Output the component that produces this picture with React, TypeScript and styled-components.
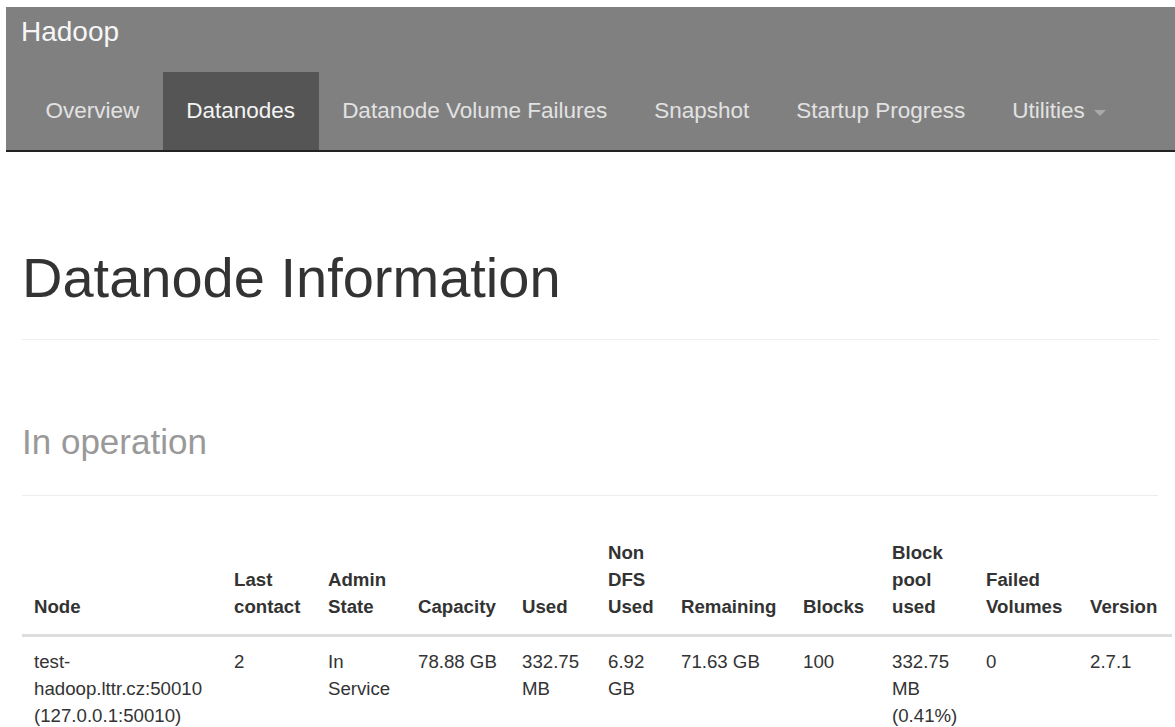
import React from "react";
import styled, { createGlobalStyle } from "styled-components";

const GlobalStyle = createGlobalStyle`
  html, body {
    margin: 0;
    padding: 0;
    background: #ffffff;
  }
  body {
    font-family: "Liberation Sans", Arial, Helvetica, sans-serif;
    color: #333333;
  }
  * {
    box-sizing: border-box;
  }
`;

const Page = styled.div`
  padding-top: 7px;
  min-height: 100vh;
`;

const Navbar = styled.nav`
  margin-left: 6px;
  background: #808080;
  border-bottom: 2px solid #222222;
  display: flex;
  flex-direction: column;
`;

const BrandRow = styled.div`
  height: 65px;
  padding: 10px 0 0 15px;
`;

const Brand = styled.a`
  display: inline-block;
  font-size: 28px;
  line-height: 30px;
  color: #f6f6f6;
  text-decoration: none;
`;

const NavList = styled.ul`
  display: flex;
  list-style: none;
  margin: 0;
  padding: 0 0 0 16px;
`;

const NavItem = styled.li<{ $active?: boolean }>`
  background: ${(p) => (p.$active ? "#555555" : "transparent")};
`;

const NavLink = styled.a<{ $active?: boolean }>`
  display: flex;
  align-items: center;
  padding: 24px 23.5px;
  font-size: 22.5px;
  line-height: 30px;
  color: ${(p) => (p.$active ? "#f4f4f4" : "#e2e2e2")};
  text-decoration: none;
  white-space: nowrap;
`;

const Caret = styled.span`
  display: inline-block;
  width: 0;
  height: 0;
  margin-left: 9px;
  margin-top: 3px;
  border-top: 6px solid #a9a9a9;
  border-left: 6px solid transparent;
  border-right: 6px solid transparent;
`;

const Main = styled.main`
  padding: 0 17px 0 22px;
`;

const PageHeader = styled.div<{ $gap: number }>`
  margin-top: ${(p) => p.$gap}px;
  padding-bottom: 15px;
  border-bottom: 1px solid #eeeeee;
`;

const Heading = styled.h1`
  margin: 0 0 15px;
  font-size: 56px;
  line-height: 1.1;
  font-weight: 400;
  color: #333333;
`;

const Subtle = styled.small`
  font-size: 35px;
  font-weight: 400;
  color: #999999;
`;

const Table = styled.table`
  margin-top: 32px;
  width: 1150px;
  table-layout: fixed;
  border-collapse: collapse;
  border-spacing: 0;
  font-size: 18.67px;
  line-height: 26.67px;
`;

const HeadCell = styled.th`
  padding: 12px 12px 14px;
  text-align: left;
  vertical-align: bottom;
  font-weight: 700;
  color: #333333;
  border-bottom: 3px solid #dddddd;
`;

const BodyCell = styled.td`
  padding: 12px;
  text-align: left;
  vertical-align: top;
  color: #333333;
`;

const navItems = [
  { label: "Overview" },
  { label: "Datanodes", active: true },
  { label: "Datanode Volume Failures" },
  { label: "Snapshot" },
  { label: "Startup Progress" },
  { label: "Utilities", dropdown: true },
];

const columns = [
  { title: "Node", width: 200 },
  { title: "Last contact", width: 94 },
  { title: "Admin State", width: 90 },
  { title: "Capacity", width: 104 },
  { title: "Used", width: 86 },
  { title: "Non DFS Used", width: 73 },
  { title: "Remaining", width: 122 },
  { title: "Blocks", width: 89 },
  { title: "Block pool used", width: 94 },
  { title: "Failed Volumes", width: 104 },
  { title: "Version", width: 94 },
];

const datanodes = [
  [
    "test-hadoop.lttr.cz:50010 (127.0.0.1:50010)",
    "2",
    "In Service",
    "78.88 GB",
    "332.75 MB",
    "6.92 GB",
    "71.63 GB",
    "100",
    "332.75 MB (0.41%)",
    "0",
    "2.7.1",
  ],
];

export default function App() {
  return (
    <>
      <GlobalStyle />
      <Page>
        <Navbar>
          <BrandRow>
            <Brand href="#">Hadoop</Brand>
          </BrandRow>
          <NavList>
            {navItems.map((item) => (
              <NavItem key={item.label} $active={item.active}>
                <NavLink href="#" $active={item.active}>
                  {item.label}
                  {item.dropdown && <Caret />}
                </NavLink>
              </NavItem>
            ))}
          </NavList>
        </Navbar>
        <Main>
          <PageHeader $gap={95}>
            <Heading>Datanode Information</Heading>
          </PageHeader>
          <PageHeader $gap={64}>
            <Heading>
              <Subtle>In operation</Subtle>
            </Heading>
          </PageHeader>
          <Table>
            <colgroup>
              {columns.map((c) => (
                <col key={c.title} style={{ width: c.width }} />
              ))}
            </colgroup>
            <thead>
              <tr>
                {columns.map((c) => (
                  <HeadCell key={c.title}>{c.title}</HeadCell>
                ))}
              </tr>
            </thead>
            <tbody>
              {datanodes.map((row, i) => (
                <tr key={i}>
                  {row.map((value, j) => (
                    <BodyCell key={j}>{value}</BodyCell>
                  ))}
                </tr>
              ))}
            </tbody>
          </Table>
        </Main>
      </Page>
    </>
  );
}
